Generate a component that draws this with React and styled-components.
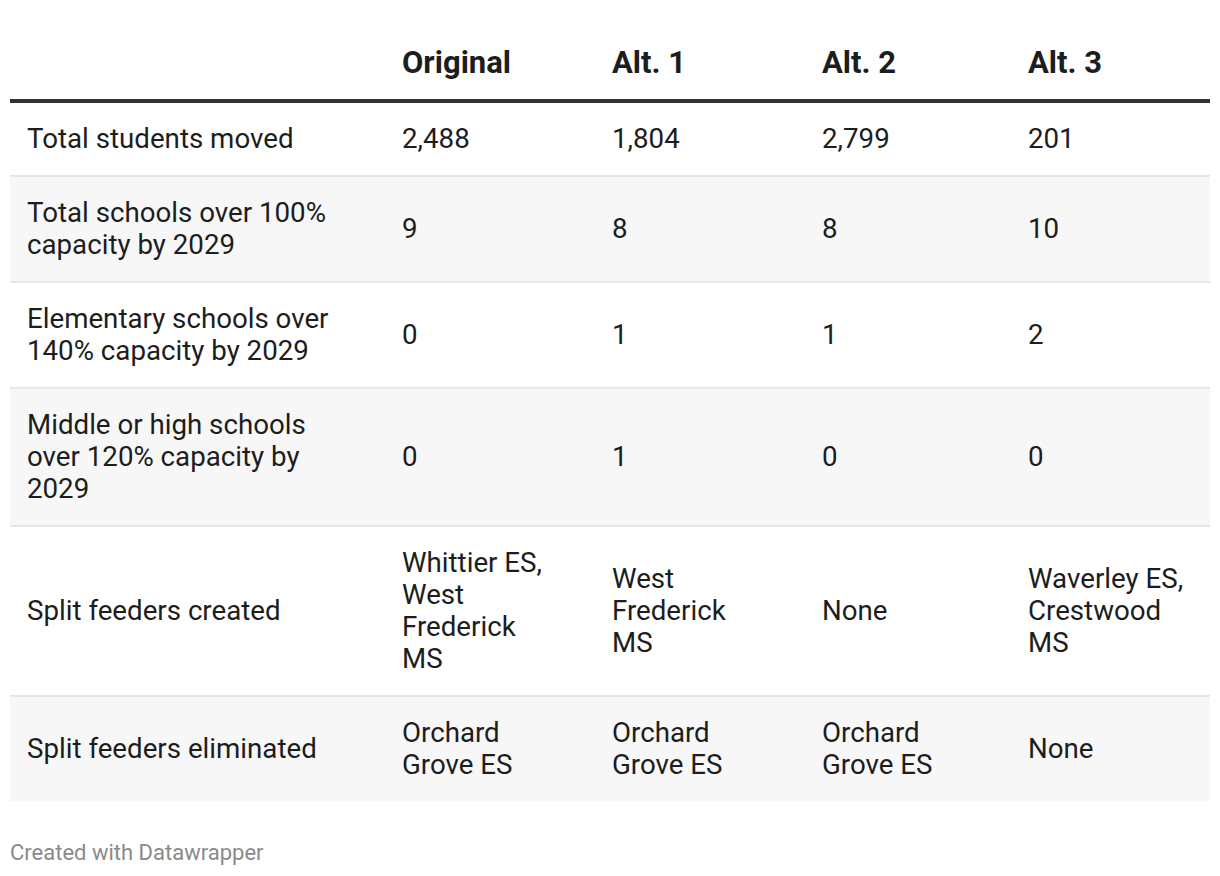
import React from "react";
import styled, { createGlobalStyle } from "styled-components";

const Global = createGlobalStyle`
  html, body { margin: 0; padding: 0; background: #ffffff; }
  body { font-family: Roboto, "Noto Sans", "Liberation Sans", sans-serif; color: #1d1d1d; }
`;

const Wrapper = styled.div`
  padding: 27px 10px 0 10px;
  width: 1200px;
`;

const Table = styled.table`
  width: 1200px;
  border-collapse: collapse;
  table-layout: fixed;
`;

const Col = styled.col`
  width: ${(p) => p.$w}px;
`;

const HeadCell = styled.th`
  text-align: left;
  font-weight: 700;
  font-size: 31px;
  line-height: 32px;
  color: #1d1d1d;
  padding: 20px ${(p) => p.$pr}px 20px 17px;
  border-bottom: 4px solid #333333;
  vertical-align: middle;
`;

const Row = styled.tr`
  background: ${(p) => (p.$shaded ? "#f7f7f7" : "#ffffff")};
  border-bottom: ${(p) => (p.$last ? "none" : "2px solid #e6e6e6")};
`;

const Cell = styled.td`
  font-size: 27.7px;
  line-height: 32px;
  color: #1d1d1d;
  padding: 20px ${(p) => p.$pr}px 20px 17px;
  vertical-align: middle;
  text-align: left;
`;

const Footer = styled.div`
  margin-top: 40px;
  font-size: 22px;
  line-height: 24px;
  color: #8a8a8a;
`;

const widths = [375, 210, 210, 206, 199];
const pads = [36, 40, 40, 36, 12];
const headers = ["", "Original", "Alt. 1", "Alt. 2", "Alt. 3"];

const rows = [
  ["Total students moved", "2,488", "1,804", "2,799", "201"],
  ["Total schools over 100% capacity by 2029", "9", "8", "8", "10"],
  ["Elementary schools over 140% capacity by 2029", "0", "1", "1", "2"],
  ["Middle or high schools over 120% capacity by 2029", "0", "1", "0", "0"],
  ["Split feeders created", "Whittier ES, West Frederick MS", "West Frederick MS", "None", "Waverley ES, Crestwood MS"],
  ["Split feeders eliminated", "Orchard Grove ES", "Orchard Grove ES", "Orchard Grove ES", "None"],
];

export default function App() {
  return (
    <>
      <Global />
      <Wrapper>
        <Table>
          <colgroup>
            {widths.map((w, i) => (
              <Col key={i} $w={w} />
            ))}
          </colgroup>
          <thead>
            <tr>
              {headers.map((h, i) => (
                <HeadCell key={i} $pr={pads[i]}>{h}</HeadCell>
              ))}
            </tr>
          </thead>
          <tbody>
            {rows.map((r, ri) => (
              <Row key={ri} $shaded={ri % 2 === 1} $last={ri === rows.length - 1}>
                {r.map((c, ci) => (
                  <Cell key={ci} $pr={pads[ci]}>{c}</Cell>
                ))}
              </Row>
            ))}
          </tbody>
        </Table>
        <Footer>Created with Datawrapper</Footer>
      </Wrapper>
    </>
  );
}
